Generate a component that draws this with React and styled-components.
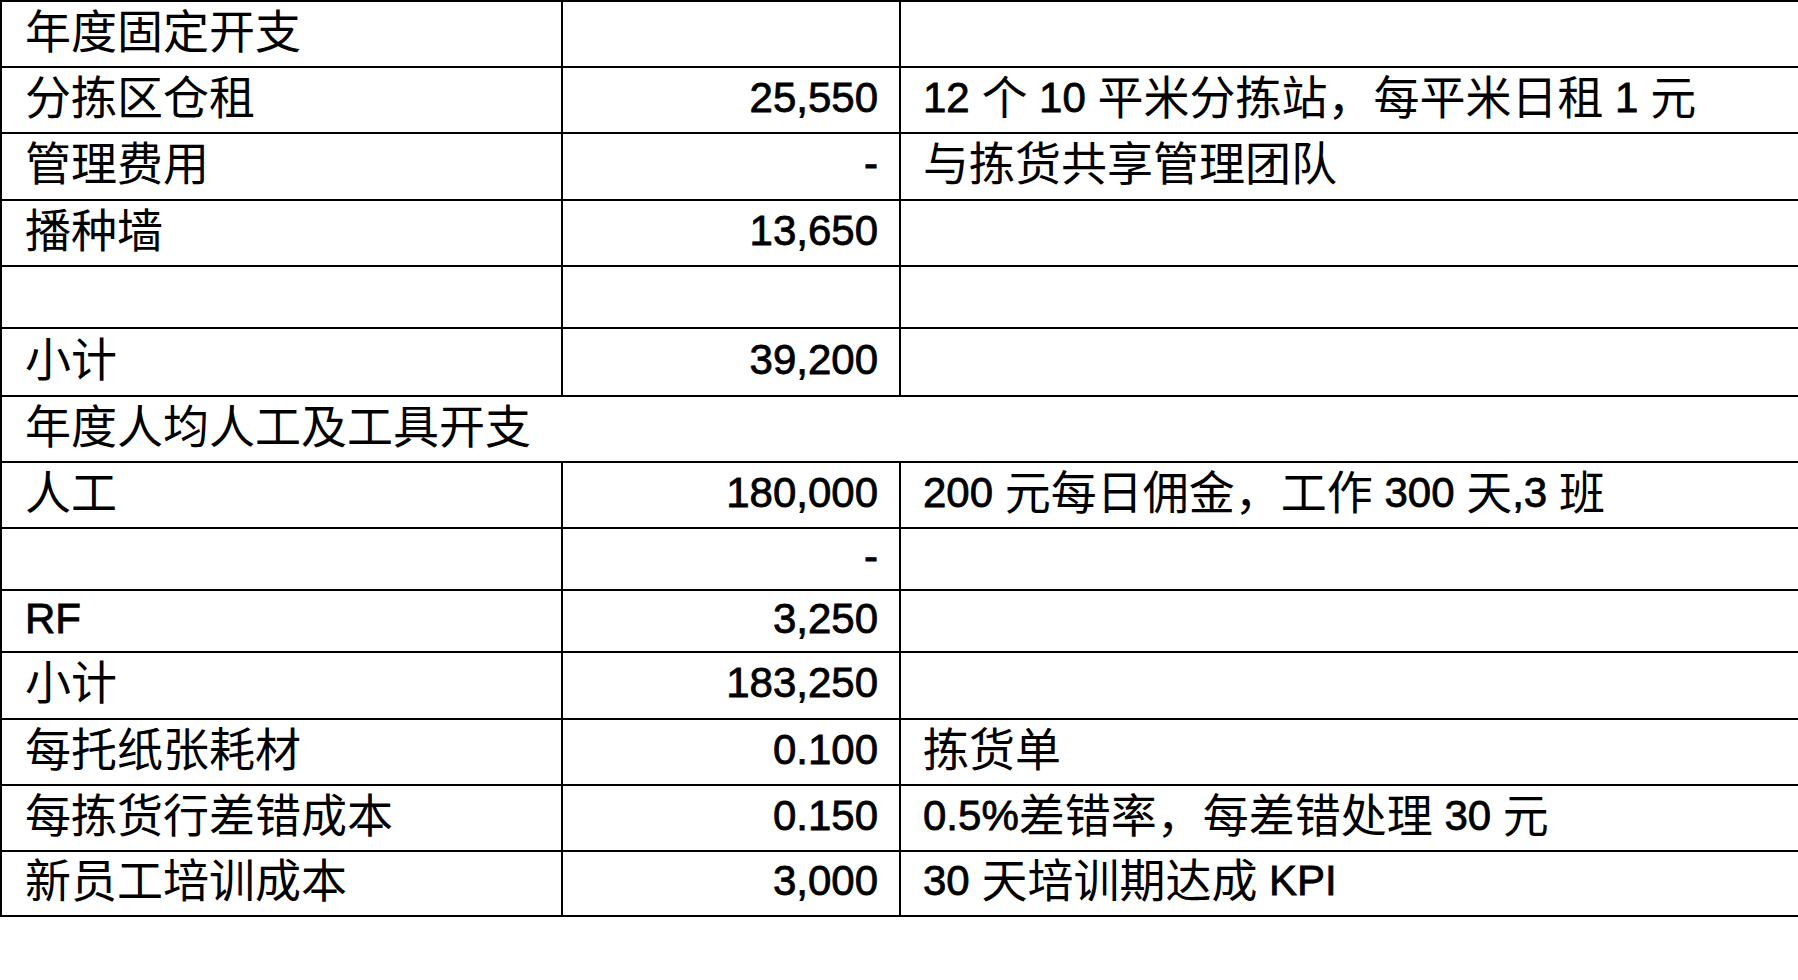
import React from "react";
import styled, { createGlobalStyle } from "styled-components";

const GlobalStyle = createGlobalStyle`
  html, body {
    margin: 0;
    padding: 0;
    background: #ffffff;
    overflow: hidden;
  }
  body {
    font-family: "Liberation Sans", "Noto Sans CJK SC", sans-serif;
    color: #000000;
  }
`;

const Sheet = styled.div`
  width: 100%;
  border-top: 2px solid #000;
  border-left: 2px solid #000;
  box-sizing: border-box;
`;

const Row = styled.div`
  display: grid;
  grid-template-columns: ${(p) => (p.$merged ? "1fr" : "561px 338px 1fr")};
  height: ${(p) => p.$h}px;
  border-bottom: 2px solid #000;
  box-sizing: border-box;
`;

const Cell = styled.div`
  display: flex;
  align-items: center;
  box-sizing: border-box;
  padding: 0 22px 4px 22px;
  font-size: 46px;
  line-height: 1.15;
  white-space: pre;
  min-width: 0;
  font-family: "Liberation Sans", "Noto Sans CJK SC", sans-serif;
  border-right: ${(p) => (p.$divider ? "2px solid #000" : "none")};
`;

const Label = styled(Cell)`
  padding-left: 23px;
`;

const Value = styled(Cell)`
  justify-content: flex-end;
  padding-right: 21px;
`;

const Note = styled(Cell)`
  padding-left: 22px;
`;

// latin runs: narrower and a little heavier, like the sheet's Calibri
const Latin = styled.span`
  font-family: "Liberation Sans", sans-serif;
  font-size: 42px;
  -webkit-text-stroke: 0.8px #000;
`;

const Text = ({ children }) => {
  if (!children) return null;
  const parts = children.match(/[\x20-\x7e]+|[^\x20-\x7e]+/g) || [];
  return parts.map((p, i) =>
    /[\x20-\x7e]/.test(p[0]) ? <Latin key={i}>{p}</Latin> : <span key={i}>{p}</span>
  );
};

const rows = [
  { label: "年度固定开支", value: "", note: "", h: 66 },
  { label: "分拣区仓租", value: "25,550", note: "12 个 10 平米分拣站，每平米日租 1 元", h: 66 },
  { label: "管理费用", value: "-", note: "与拣货共享管理团队", h: 67 },
  { label: "播种墙", value: "13,650", note: "", h: 66 },
  { label: "", value: "", note: "", h: 62 },
  { label: "小计", value: "39,200", note: "", h: 68 },
  { label: "年度人均人工及工具开支", merged: true, h: 66 },
  { label: "人工", value: "180,000", note: "200 元每日佣金，工作 300 天,3 班", h: 66 },
  { label: "", value: "-", note: "", h: 62 },
  { label: "RF", value: "3,250", note: "", h: 62 },
  { label: "小计", value: "183,250", note: "", h: 67 },
  { label: "每托纸张耗材", value: "0.100", note: "拣货单", h: 66 },
  { label: "每拣货行差错成本", value: "0.150", note: "0.5%差错率，每差错处理 30 元", h: 66 },
  { label: "新员工培训成本", value: "3,000", note: "30 天培训期达成 KPI", h: 65 },
];

export default function App() {
  return (
    <>
      <GlobalStyle />
      <Sheet>
        {rows.map((r, i) =>
          r.merged ? (
            <Row key={i} $h={r.h} $merged>
              <Label><Text>{r.label}</Text></Label>
            </Row>
          ) : (
            <Row key={i} $h={r.h}>
              <Label $divider><Text>{r.label}</Text></Label>
              <Value $divider><Text>{r.value}</Text></Value>
              <Note><Text>{r.note}</Text></Note>
            </Row>
          )
        )}
      </Sheet>
    </>
  );
}
